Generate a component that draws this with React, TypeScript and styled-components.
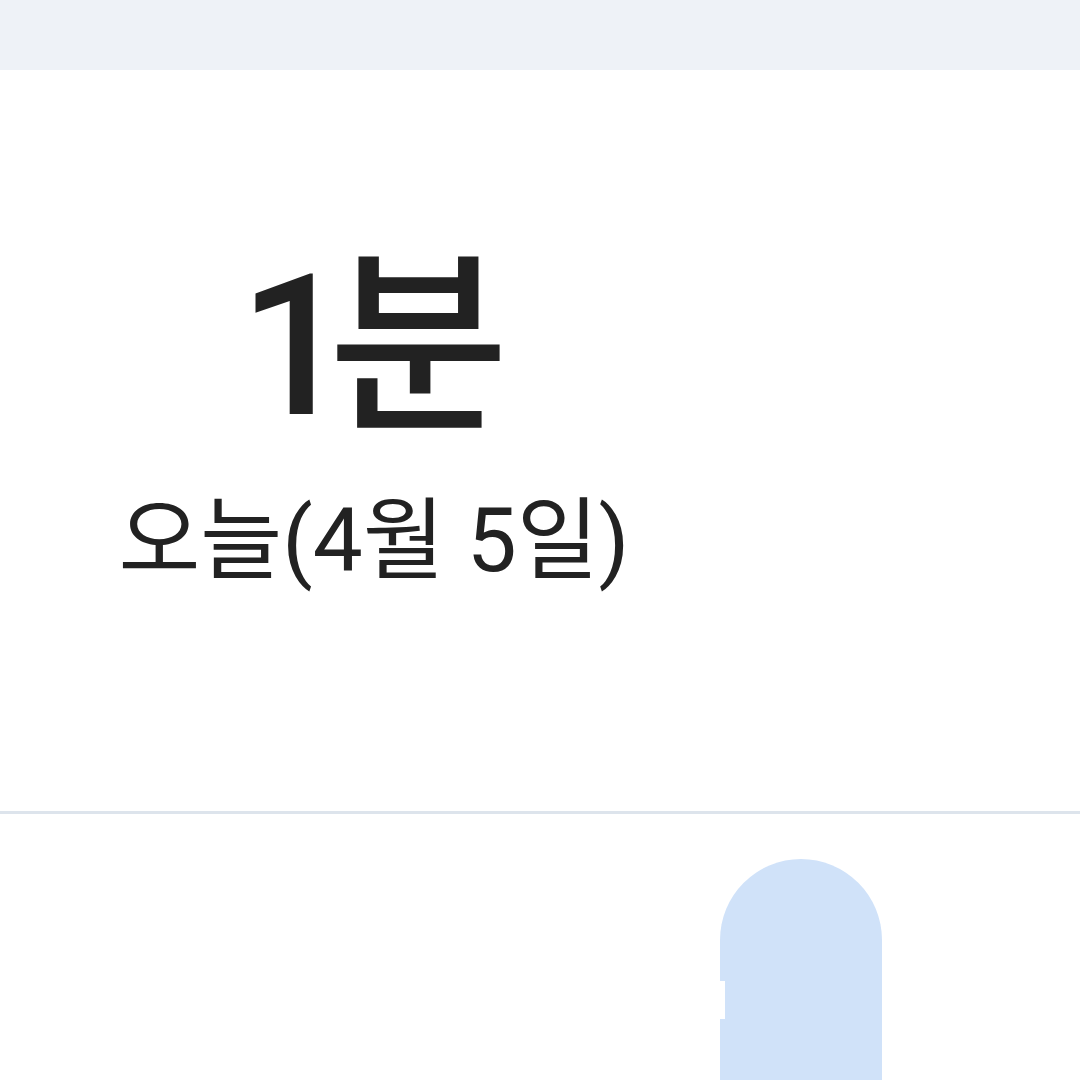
import styled, { createGlobalStyle } from "styled-components";

const GlobalStyle = createGlobalStyle`
  html, body {
    margin: 0;
    padding: 0;
    background: #ffffff;
    font-family: Roboto, "Noto Sans CJK KR", sans-serif;
  }
`;

const App = () => {
  return (
    <Page>
      <GlobalStyle />
      <TopBand />
      <Summary>
        <StatColumn>
          <StatValue>
            <Digit>1</Digit>
            <Unit>분</Unit>
          </StatValue>
          <StatLabel>오늘(4월 5일)</StatLabel>
        </StatColumn>
      </Summary>
      <Divider />
      <Chart>
        <BarSlot>
          <Bar style={{ height: 240 }} />
          <TickMask />
        </BarSlot>
      </Chart>
    </Page>
  );
};

export default App;

const Page = styled.div`
  width: 1080px;
  height: 1080px;
  overflow: hidden;
  display: flex;
  flex-direction: column;
  background: #ffffff;
`;

const TopBand = styled.div`
  height: 70px;
  flex-shrink: 0;
  background: #eef2f7;
`;

const Summary = styled.section`
  height: 741px;
  flex-shrink: 0;
  display: flex;
`;

const StatColumn = styled.div`
  width: 748px;
  display: flex;
  flex-direction: column;
  align-items: center;
  padding-top: 161px;
`;

const StatValue = styled.div`
  font-size: 196px;
  font-weight: 500;
  line-height: 1;
  color: #222222;
  display: flex;
  align-items: baseline;
`;

const Digit = styled.span`
  font-family: Roboto, sans-serif;
  letter-spacing: -22px;
`;

const Unit = styled.span`
  font-family: "Noto Sans CJK KR", sans-serif;
`;

const StatLabel = styled.div`
  margin-top: 51px;
  font-family: Roboto, "Noto Sans CJK KR", sans-serif;
  font-size: 89px;
  font-weight: 400;
  line-height: 1;
  color: #222222;
`;

const Divider = styled.div`
  height: 3px;
  flex-shrink: 0;
  background: #dde4ec;
`;

const Chart = styled.section`
  flex: 1;
  display: flex;
  padding: 45px 0 0 720px;
`;

const BarSlot = styled.div`
  position: relative;
  width: 162px;
`;

const Bar = styled.div`
  width: 100%;
  background: #d0e2f9;
  border-radius: 81px 81px 0 0;
`;

const TickMask = styled.div`
  position: absolute;
  left: -12px;
  top: 122px;
  width: 17px;
  height: 38px;
  background: #ffffff;
`;
